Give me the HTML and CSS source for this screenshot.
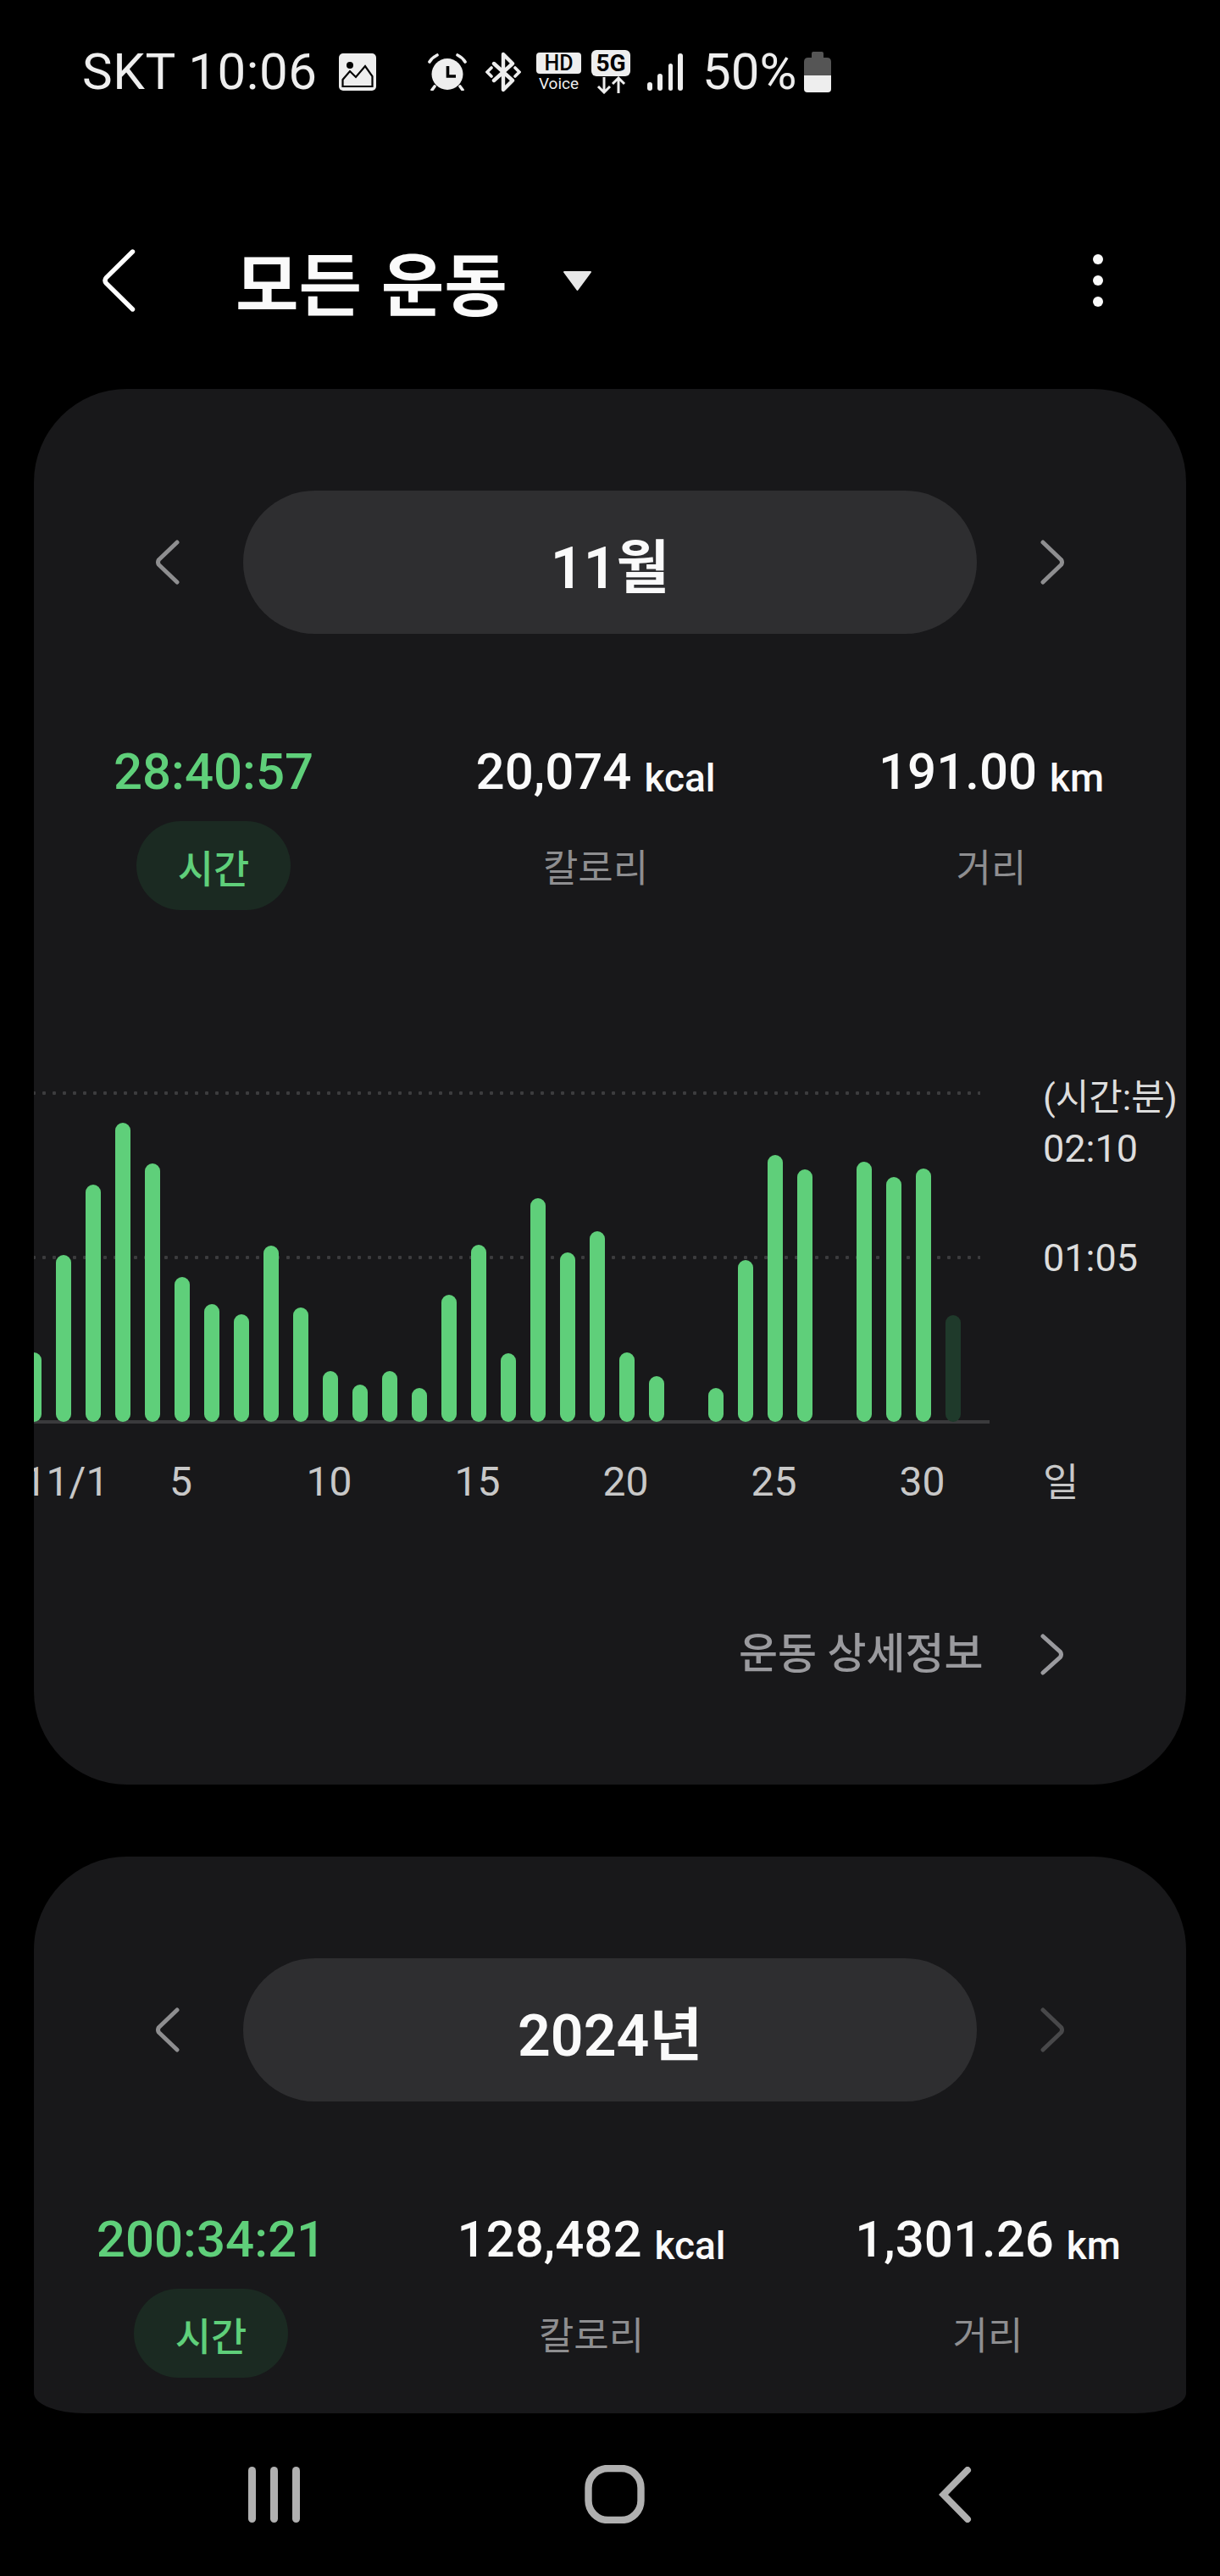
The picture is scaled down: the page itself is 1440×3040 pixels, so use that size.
FILE: index.html

```html
<!DOCTYPE html>
<html lang="ko">

<head>
    <meta charset="utf-8">
    <title>모든 운동</title>
    <link rel="stylesheet" href="styles.css">
</head>

<body>
    <div class="status-bar">
        <span class="status-text clock">SKT 10:06</span>
        <svg class="ic-image" width="44" height="44" viewBox="0 0 44 44">
            <rect width="44" height="44" rx="5" fill="#eee" />
            <circle cx="13" cy="14" r="4" fill="#000" />
            <path d="M4.5 39V31L13 21L20 28L31 15L39.5 27V39Z" fill="none" stroke="#000" stroke-width="2.2" />
        </svg>
        <svg class="ic-alarm" width="46" height="44" viewBox="0 0 46 44">
            <circle cx="23" cy="24.5" r="18.5" fill="#eee" />
            <path d="M23.5 15V27H33" fill="none" stroke="#000" stroke-width="3.6" />
            <path d="M2 10Q5 5 11 2M44 10Q41 5 35 2M8 39L5 43M38 39L41 43" fill="none" stroke="#eee" stroke-width="3.6" stroke-linecap="round" />
        </svg>
        <svg class="ic-bt" width="42" height="48" viewBox="0 0 42 48">
            <path d="M10 14L32 34L21 45V3L32 14L10 34" fill="none" stroke="#eee" stroke-width="4.4" stroke-linejoin="round" stroke-linecap="round" />
            <path d="M7 19L2 24L7 29M35 19L40 24L35 29" fill="none" stroke="#eee" stroke-width="3.6" stroke-linecap="round" />
        </svg>
        <div class="ic-hd">
            <span class="hd-box">HD</span>
            <span class="hd-voice">Voice</span>
        </div>
        <div class="ic-5g">
            <span class="box-5g">5G</span>
            <svg width="46" height="21" viewBox="0 0 46 21">
                <path d="M15 1V19M8 12L15 19L22 12M32 20V2M25 9L32 2L39 9" fill="none" stroke="#eee" stroke-width="3" />
            </svg>
        </div>
        <svg class="ic-signal" width="43" height="44" viewBox="0 0 43 44">
            <rect x="0" y="34" width="6" height="10" rx="3" fill="#eee" />
            <rect x="12" y="24" width="6" height="20" rx="3" fill="#eee" />
            <rect x="25" y="12" width="5" height="32" rx="2.5" fill="#eee" />
            <rect x="36" y="0" width="6" height="44" rx="3" fill="#eee" />
        </svg>
        <span class="status-text battery-text">50%</span>
        <svg class="ic-battery" width="32" height="48" viewBox="0 0 32 48">
            <path d="M9 2Q9 0 11 0H21Q23 0 23 2V7H27Q32 7 32 12V28H0V12Q0 7 5 7H9Z" fill="#555" />
            <path d="M0 28H32V44Q32 48 28 48H4Q0 48 0 44Z" fill="#eee" />
        </svg>
    </div>

    <div class="header">
        <svg class="back" width="40" height="74" viewBox="0 0 40 74">
            <path d="M36.5 3L5.5 33.5Q2.5 37 5.5 40.5L36.5 71" fill="none" stroke="#fff" stroke-width="5.4" stroke-linecap="round" />
        </svg>
        <h1 class="title">모든 운동</h1>
        <svg class="caret" width="35" height="25" viewBox="0 0 35 25">
            <path d="M2 2H33L17.5 23Z" fill="#e8e8e8" stroke="#e8e8e8" stroke-width="2" stroke-linejoin="round" />
        </svg>
        <div class="kebab">
            <span></span>
            <span></span>
            <span></span>
        </div>
    </div>

    <div class="card">
        <div class="period">
            <svg width="29" height="53" viewBox="0 0 29 53">
                <path d="M26 3L4.5 23.5Q2.5 26.5 4.5 29.5L26 50" fill="none" stroke="#8e8e90" stroke-width="5" stroke-linecap="round" />
            </svg>
            <div class="period-pill">11월</div>
            <svg width="29" height="53" viewBox="0 0 29 53">
                <path d="M3 3L24.5 23.5Q26.5 26.5 24.5 29.5L3 50" fill="none" stroke="#8e8e90" stroke-width="5" stroke-linecap="round" />
            </svg>
        </div>

        <div class="stats">
            <div class="stat">
                <div class="stat-value green">28:40:57</div>
                <div class="stat-label active">시간</div>
            </div>
            <div class="stat">
                <div class="stat-value">20,074 <span class="unit">kcal</span></div>
                <div class="stat-label">칼로리</div>
            </div>
            <div class="stat">
                <div class="stat-value">191.00 <span class="unit">km</span></div>
                <div class="stat-label">거리</div>
            </div>
        </div>

        <div class="chart">
            <div class="plot">
                <div class="gridline grid-top"></div>
                <div class="gridline grid-mid"></div>
                <div class="axis"></div>
                <div class="bars">
                    <div class="bar" style="height:82px"></div>
                    <div class="bar" style="height:197px"></div>
                    <div class="bar" style="height:280px"></div>
                    <div class="bar" style="height:353px"></div>
                    <div class="bar" style="height:305px"></div>
                    <div class="bar" style="height:171px"></div>
                    <div class="bar" style="height:139px"></div>
                    <div class="bar" style="height:127px"></div>
                    <div class="bar" style="height:208px"></div>
                    <div class="bar" style="height:135px"></div>
                    <div class="bar" style="height:60px"></div>
                    <div class="bar" style="height:44px"></div>
                    <div class="bar" style="height:60px"></div>
                    <div class="bar" style="height:40px"></div>
                    <div class="bar" style="height:150px"></div>
                    <div class="bar" style="height:209px"></div>
                    <div class="bar" style="height:81px"></div>
                    <div class="bar" style="height:264px"></div>
                    <div class="bar" style="height:200px"></div>
                    <div class="bar" style="height:225px"></div>
                    <div class="bar" style="height:82px"></div>
                    <div class="bar" style="height:54px"></div>
                    <div class="bar" style="height:0"></div>
                    <div class="bar" style="height:40px"></div>
                    <div class="bar" style="height:191px"></div>
                    <div class="bar" style="height:315px"></div>
                    <div class="bar" style="height:298px"></div>
                    <div class="bar" style="height:0"></div>
                    <div class="bar" style="height:307px"></div>
                    <div class="bar" style="height:289px"></div>
                    <div class="bar" style="height:299px"></div>
                    <div class="bar dim" style="height:126px"></div>
                </div>
            </div>
            <div class="yaxis">
                <div class="yunit">(시간:분)</div>
                <div class="ytick ytick-top">02:10</div>
                <div class="ytick ytick-mid">01:05</div>
            </div>
            <div class="ticks">
                <span class="tick tick-first">11/1</span>
                <span class="tick tick-five">5</span>
                <span class="tick">10</span>
                <span class="tick">15</span>
                <span class="tick">20</span>
                <span class="tick">25</span>
                <span class="tick">30</span>
            </div>
            <div class="xunit">일</div>
        </div>

        <div class="detail-link">
            <span>운동 상세정보</span>
            <svg width="28" height="49" viewBox="0 0 28 49">
                <path d="M3 3L23.5 21.5Q25.5 24.5 23.5 27.5L3 46" fill="none" stroke="#9a9a9e" stroke-width="5" stroke-linecap="round" />
            </svg>
        </div>
    </div>

    <div class="card card-year">
        <div class="period">
            <svg width="29" height="53" viewBox="0 0 29 53">
                <path d="M26 3L4.5 23.5Q2.5 26.5 4.5 29.5L26 50" fill="none" stroke="#8e8e90" stroke-width="5" stroke-linecap="round" />
            </svg>
            <div class="period-pill">2024년</div>
            <svg width="29" height="53" viewBox="0 0 29 53">
                <path d="M3 3L24.5 23.5Q26.5 26.5 24.5 29.5L3 50" fill="none" stroke="#48484a" stroke-width="5" stroke-linecap="round" />
            </svg>
        </div>

        <div class="stats">
            <div class="stat">
                <div class="stat-value green">200:34:21</div>
                <div class="stat-label active">시간</div>
            </div>
            <div class="stat">
                <div class="stat-value">128,482 <span class="unit">kcal</span></div>
                <div class="stat-label">칼로리</div>
            </div>
            <div class="stat">
                <div class="stat-value">1,301.26 <span class="unit">km</span></div>
                <div class="stat-label">거리</div>
            </div>
        </div>
    </div>

    <div class="nav">
        <svg class="nav-recent" width="62" height="66" viewBox="0 0 62 66">
            <rect x="0" y="0" width="9" height="66" rx="4.5" fill="#b0b0b0" />
            <rect x="26" y="0" width="9" height="66" rx="4.5" fill="#b0b0b0" />
            <rect x="52" y="0" width="9" height="66" rx="4.5" fill="#b0b0b0" />
        </svg>
        <svg class="nav-home" width="71" height="69" viewBox="0 0 71 69">
            <rect x="4.5" y="4" width="62" height="61" rx="23" fill="none" stroke="#b0b0b0" stroke-width="8.4" />
        </svg>
        <svg class="nav-back" width="39" height="66" viewBox="0 0 39 66">
            <path d="M34 4L5.5 33L34 62" fill="none" stroke="#b0b0b0" stroke-width="8" stroke-linecap="round" />
        </svg>
    </div>
</body>

</html>
```

FILE: styles.css

```css
* {
    box-sizing: border-box;
}

body {
    margin: 0;
    width: 1440px;
    height: 3040px;
    overflow: hidden;
    background: #000;
    color: #fafafa;
    font-family: Roboto, "Noto Sans CJK KR", sans-serif;
}

/* status bar */
.status-bar {
    display: flex;
    align-items: center;
    height: 60px;
    margin-top: 55px;
    padding-left: 97px;
    color: #eee;
}

.status-text {
    font-size: 60px;
    line-height: 60px;
}

.clock {
    width: 273px;
    letter-spacing: 0.6px;
    white-space: nowrap;
}

.ic-image {
    margin-left: 30px;
}

.ic-alarm {
    margin-left: 61px;
}

.ic-bt {
    margin-left: 22px;
}

.ic-hd {
    display: flex;
    flex-direction: column;
    align-items: center;
    width: 53px;
    margin-left: 18px;
}

.hd-box {
    width: 53px;
    height: 25px;
    background: #eee;
    border-radius: 4px;
    color: #000;
    font-size: 25px;
    font-weight: 500;
    line-height: 25px;
    text-align: center;
}

.hd-voice {
    margin-top: 3px;
    font-size: 19px;
    line-height: 18px;
}

.ic-5g {
    display: flex;
    flex-direction: column;
    width: 46px;
    margin-left: 12px;
}

.box-5g {
    height: 31px;
    background: #eee;
    border-radius: 6px;
    color: #000;
    font-size: 28px;
    font-weight: 700;
    line-height: 31px;
    text-align: center;
}

.ic-signal {
    margin-left: 20px;
}

.battery-text {
    margin-left: 22px;
}

.ic-battery {
    margin-left: 9px;
}

/* header */
.header {
    display: flex;
    align-items: center;
    height: 120px;
    margin-top: 156px;
    padding-left: 120px;
}

.title {
    width: 324px;
    margin: 0 0 0 118px;
    font-family: "Noto Sans CJK KR", sans-serif;
    font-size: 81px;
    font-weight: 700;
    line-height: 120px;
    white-space: nowrap;
}

.caret {
    margin-left: 62px;
}

.kebab {
    display: flex;
    flex-direction: column;
    gap: 13px;
    margin-left: 591px;
}

.kebab span {
    width: 12px;
    height: 12px;
    border-radius: 50%;
    background: #fafafa;
}

/* cards */
.card {
    width: 1360px;
    height: 1647px;
    margin: 68px 0 0 40px;
    padding-top: 120px;
    overflow: hidden;
    background: #18181a;
    border-radius: 110px;
}

.card-year {
    height: 657px;
    margin-top: 85px;
    border-radius: 110px 110px 60px 60px / 110px 110px 24px 24px;
}

.period {
    display: flex;
    align-items: center;
    gap: 75px;
    padding-left: 143px;
}

.period-pill {
    display: flex;
    align-items: center;
    justify-content: center;
    width: 866px;
    height: 169px;
    padding-top: 2px;
    background: #2e2e30;
    border-radius: 85px;
    font-size: 68px;
    font-weight: 600;
}

/* numbers under the period */
.stats {
    display: grid;
    grid-template-columns: 424px 478px 456px;
    margin-top: 133px;
}

.card-year .stats {
    grid-template-columns: 418px 480px 456px;
}

.stat {
    display: flex;
    flex-direction: column;
    align-items: center;
}

.stat-value {
    height: 60px;
    font-size: 60px;
    font-weight: 500;
    line-height: 60px;
    white-space: nowrap;
}

.green {
    color: #5fcf7a;
}

.unit {
    font-size: 46px;
    line-height: 1;
    vertical-align: -3px;
}

.stat-label {
    display: flex;
    align-items: center;
    justify-content: center;
    width: 182px;
    height: 105px;
    margin-top: 28px;
    border-radius: 53px;
    color: #8e8e90;
    font-size: 45px;
}

.stat-label.active {
    background: #1b2a22;
    color: #5fcf7a;
    font-size: 46px;
    font-weight: 500;
}

/* chart */
.chart {
    display: grid;
    grid-template-columns: 1128px 1fr;
    margin-top: 188px;
}

.plot {
    position: relative;
    height: 418px;
}

.gridline {
    position: absolute;
    left: 0;
    width: 1117px;
    height: 4px;
    background-image: radial-gradient(circle, #3c3c3e 2px, transparent 2.4px);
    background-position: 6px 0;
    background-size: 12px 4px;
}

.grid-top {
    top: 26px;
}

.grid-mid {
    top: 220px;
}

.axis {
    position: absolute;
    left: 0;
    right: 0;
    bottom: 0;
    height: 4px;
    background: #3a3a3c;
}

.bars {
    position: relative;
    display: flex;
    align-items: flex-end;
    gap: 17px;
    height: 416px;
    margin-left: -9px;
}

.bar {
    flex: none;
    width: 18px;
    background: #5fcf7a;
    border-radius: 9px;
}

.bar.dim {
    background: #1f3a2b;
}

.yaxis {
    padding: 10px 0 0 63px;
    color: #ddd;
}

.yunit {
    font-size: 43px;
    line-height: 46px;
}

.ytick {
    font-size: 45px;
    line-height: 46px;
}

.ytick-top {
    margin-top: 15px;
}

.ytick-mid {
    margin-top: 83px;
}

.ticks {
    display: flex;
    margin: 46px 0 0 -54px;
    color: #c8c8c8;
    font-size: 48px;
    line-height: 46px;
}

.tick {
    flex: none;
    width: 175px;
    text-align: center;
}

.tick-first {
    padding-left: 9px;
}

.tick-five {
    margin-left: -35px;
}

.xunit {
    margin-top: 46px;
    padding-left: 63px;
    color: #c8c8c8;
    font-size: 46px;
    line-height: 46px;
}

.detail-link {
    display: flex;
    align-items: center;
    height: 60px;
    margin-top: 150px;
    padding-left: 832px;
    color: #9a9a9e;
    font-size: 50px;
    font-weight: 500;
    line-height: 60px;
}

.detail-link svg {
    margin-left: 68px;
}

/* navigation bar */
.nav {
    display: flex;
    align-items: center;
    margin-top: 61px;
    padding-left: 293px;
}

.nav-home {
    margin-left: 335px;
}

.nav-back {
    margin-left: 347px;
}
```
